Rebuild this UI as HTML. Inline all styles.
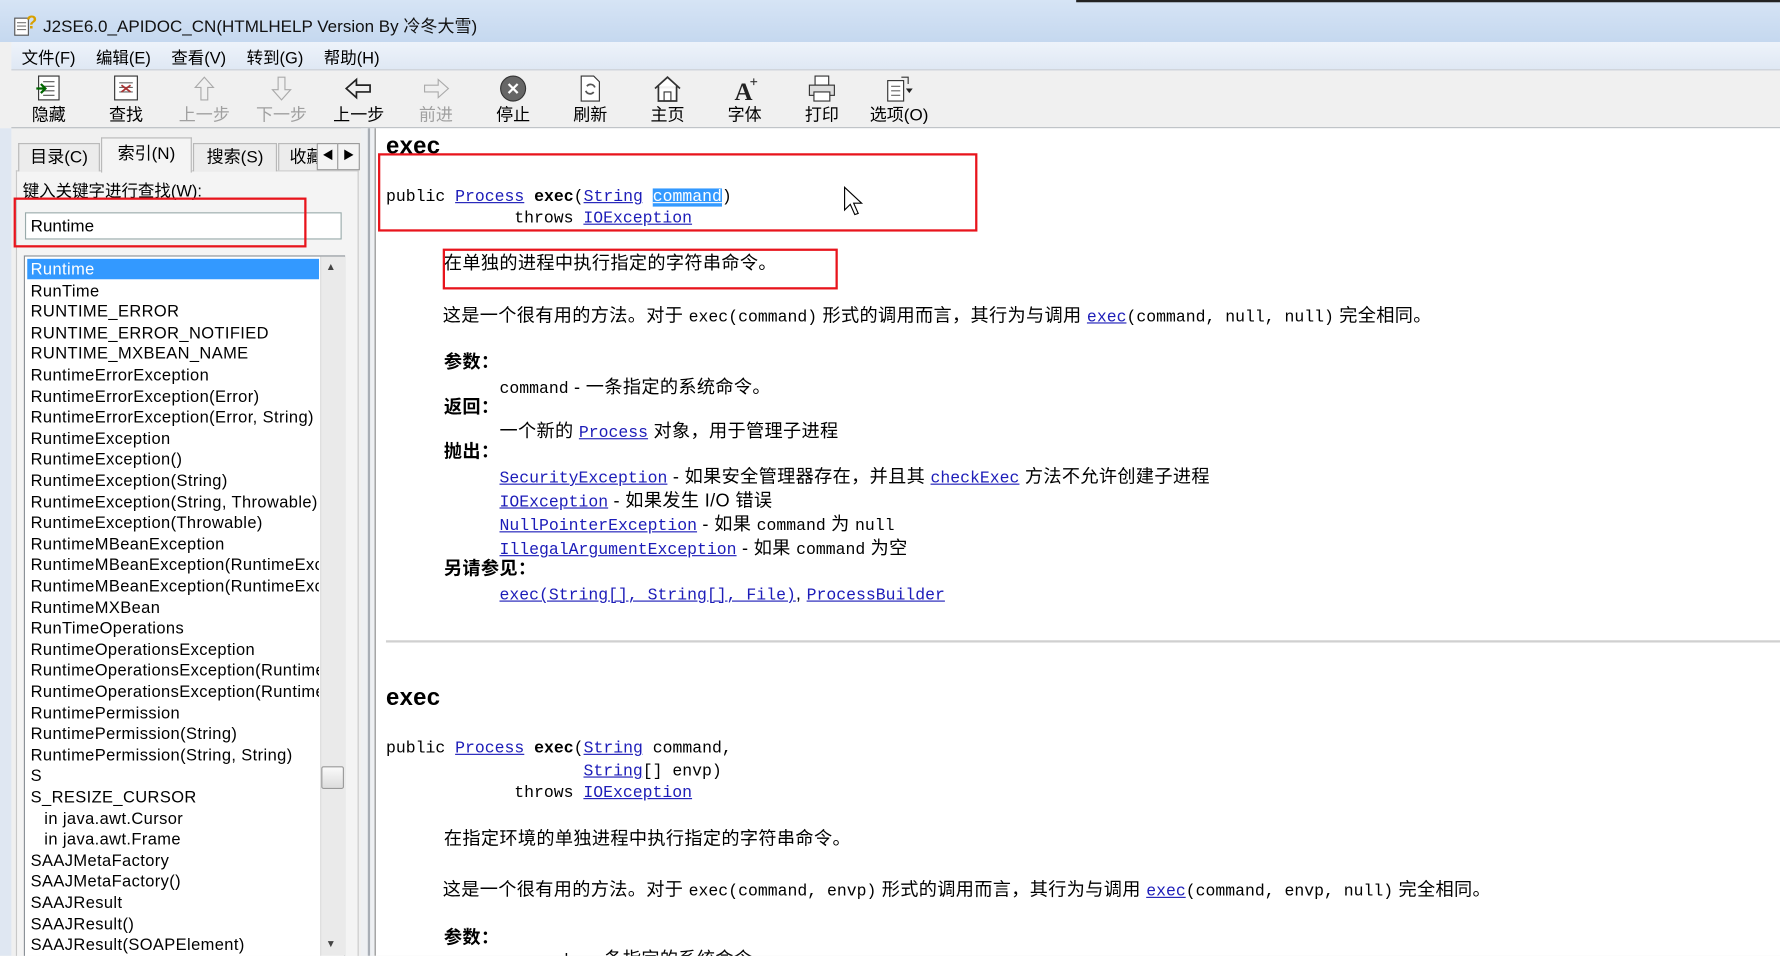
<!DOCTYPE html>
<html><head><meta charset="utf-8"><style>
html,body{margin:0;padding:0;width:1780px;height:956px;overflow:hidden;background:#f0f0f0}
#w{position:absolute;left:0;top:0;width:1568px;height:842px;transform:scale(1.13520);transform-origin:0 0;font-family:"Liberation Sans","Noto Sans CJK SC",sans-serif;color:#000;background:#f0f0f0;overflow:hidden}
.a{position:absolute;white-space:nowrap}
.tb{position:absolute;top:66px;width:60px;text-align:center;font-size:15px}
.tb svg{display:block;margin:0 auto 0}
.g{color:#a0a0a0}
.li{position:absolute;left:27px;font-size:14.5px;line-height:18.6px;white-space:nowrap;letter-spacing:0.35px}
.c{position:absolute;white-space:nowrap;line-height:20px;font-size:16px;margin-top:2px;letter-spacing:0.3px}
.m{font-family:"Liberation Mono","Noto Sans CJK SC",monospace;font-size:14.5px;letter-spacing:0}
a,.l{color:#1c1cb8;text-decoration:underline}
b.h{font-weight:bold}
.rb{position:absolute;border:2px solid #e8141c}
</style></head><body><div id="w">
<!-- title -->
<div class="a" style="left:0;top:0;width:1568px;height:37px;background:linear-gradient(#d6e4f5,#c5d8ef)"></div>
<div class="a" style="left:948px;top:0;width:620px;height:2px;background:#222"></div>
<svg class="a" style="left:12px;top:11px" width="20" height="22"><rect x="1" y="5" width="12" height="15" fill="#fff" stroke="#555"/><path d="M3 9h8M3 12h8M3 15h8" stroke="#777"/><text x="11" y="14" font-size="16" font-weight="bold" fill="#d8a000" font-family="Liberation Sans">?</text></svg>
<div class="a" style="left:38px;top:12px;font-size:15px;color:#111">J2SE6.0_APIDOC_CN(HTMLHELP Version By 冷冬大雪)</div>
<!-- menu -->
<div class="a" style="left:10px;top:37px;width:1558px;height:24px;background:linear-gradient(#eef3fa,#dfe8f4)"></div>
<div class="a" style="left:19px;top:40px;font-size:14.5px;word-spacing:14px">文件(F) 编辑(E) 查看(V) 转到(G) 帮助(H)</div>
<div class="a" style="left:10px;top:61px;width:1558px;height:1px;background:#c8cdd4"></div>
<!-- toolbar -->
<div class="tb" style="left:13px"><svg width="26" height="24"><rect x="4" y="1" width="18" height="21" fill="#fff" stroke="#333"/><path d="M8 6h10M8 10h10M8 14h10M8 18h10" stroke="#555"/><path d="M2 12h8M6 8l4 4-4 4" stroke="#060" stroke-width="2" fill="none"/></svg>隐藏</div>
<div class="tb" style="left:81px"><svg width="26" height="24"><rect x="3" y="1" width="20" height="21" fill="#fff" stroke="#333"/><path d="M7 7h12M7 11h12M7 15h12" stroke="#666"/><path d="M9 9l8 6M17 9l-8 6" stroke="#a33" stroke-width="1.5"/></svg>查找</div>
<div class="tb g" style="left:150px"><svg width="26" height="24"><path d="M13 2l8 9h-5v11h-6V11H5z" fill="none" stroke="#aaa"/></svg>上一步</div>
<div class="tb g" style="left:218px"><svg width="26" height="24"><path d="M13 22l8-9h-5V2h-6v11H5z" fill="none" stroke="#aaa"/></svg>下一步</div>
<div class="tb" style="left:286px"><svg width="26" height="24"><path d="M2 12l9-8v5h12v6H11v5z" fill="none" stroke="#222" stroke-width="1.5"/></svg>上一步</div>
<div class="tb g" style="left:354px"><svg width="26" height="24"><path d="M24 12l-9-8v5H3v6h12v5z" fill="none" stroke="#aaa"/></svg>前进</div>
<div class="tb" style="left:422px"><svg width="26" height="24"><circle cx="13" cy="12" r="11" fill="#666" stroke="#333"/><path d="M9 8l8 8M17 8l-8 8" stroke="#fff" stroke-width="2"/></svg>停止</div>
<div class="tb" style="left:490px"><svg width="26" height="24"><path d="M5 1h11l5 5v17H5z" fill="#fff" stroke="#333"/><path d="M10 10a4 4 0 0 1 7 1M16 15a4 4 0 0 1-7-1" stroke="#555" stroke-width="1.5" fill="none"/></svg>刷新</div>
<div class="tb" style="left:558px"><svg width="26" height="24"><path d="M2 12L13 2l11 10M5 10v13h16V10" fill="#fff" stroke="#333" stroke-width="1.5"/><rect x="10" y="15" width="6" height="8" fill="none" stroke="#333"/></svg>主页</div>
<div class="tb" style="left:626px"><svg width="26" height="24"><text x="4" y="22" font-size="22" font-weight="bold" font-family="Liberation Serif" fill="#222">A</text><path d="M21 3v6M18 6h6" stroke="#333"/></svg>字体</div>
<div class="tb" style="left:694px"><svg width="26" height="24"><rect x="7" y="1" width="12" height="8" fill="#fff" stroke="#333"/><rect x="2" y="9" width="22" height="9" fill="#ddd" stroke="#333"/><rect x="6" y="15" width="14" height="8" fill="#fff" stroke="#333"/></svg>打印</div>
<div class="tb" style="left:762px"><svg width="26" height="24"><rect x="3" y="5" width="14" height="18" fill="#fff" stroke="#333"/><path d="M6 10h8M6 14h8M6 18h8" stroke="#666"/><path d="M15 2h6v6" stroke="#333" fill="none"/><path d="M19 12h6l-3 4z" fill="#222"/></svg>选项(O)</div>
<div class="a" style="left:10px;top:112px;width:1558px;height:1px;background:#b8bcc2"></div>
<!-- left pane -->
<div class="a" style="left:0;top:113px;width:10px;height:729px;background:#dfe7f2"></div>
<div class="a" style="left:14px;top:150px;width:300px;height:692px;border:1px solid #c8c8c8;border-bottom:none;background:#f4f4f4"></div>
<div class="a" style="left:16px;top:126px;width:70px;height:24px;border:1px solid #b8b8b8;border-bottom:none;background:#ececec;font-size:15px;text-align:center;line-height:24px">目录(C)</div>
<div class="a" style="left:89px;top:121px;width:78px;height:30px;border:1px solid #b8b8b8;border-bottom:none;background:#f4f4f4;font-size:15px;text-align:center;line-height:28px">索引(N)</div>
<div class="a" style="left:170px;top:126px;width:72px;height:24px;border:1px solid #b8b8b8;border-bottom:none;background:#ececec;font-size:15px;text-align:center;line-height:24px">搜索(S)</div>
<div class="a" style="left:245px;top:126px;width:36px;height:24px;border:1px solid #b8b8b8;border-bottom:none;background:#ececec;font-size:15px;line-height:24px;padding-left:9px;overflow:hidden;box-sizing:border-box">收藏</div>
<div class="a" style="left:279px;top:126px;width:18px;height:22px;border:1px solid #999;background:#f4f4f4;font-size:10px;text-align:center;line-height:22px">◀</div>
<div class="a" style="left:297px;top:126px;width:18px;height:22px;border:1px solid #999;background:#f4f4f4;font-size:10px;text-align:center;line-height:22px">▶</div>
<div class="a" style="left:20px;top:157px;font-size:14.5px">键入关键字进行查找(W):</div>
<div class="a" style="left:22px;top:187px;width:279px;height:24px;border:1px solid #9aa;background:#fff;box-sizing:border-box;font-size:15px;line-height:24px;padding-left:4px">Runtime</div>
<div class="rb" style="left:12px;top:174px;width:254px;height:40px"></div>
<div class="a" style="left:21px;top:225px;width:283px;height:620px;border:1px solid #8a8f96;background:#fff;box-sizing:border-box"></div>
<div class="a" style="left:282px;top:226px;width:21px;height:616px;background:#eaeaea;border-left:1px solid #ddd"></div>
<div class="a" style="left:287px;top:230px;font-size:9px;color:#444">▲</div>
<div class="a" style="left:287px;top:826px;font-size:9px;color:#444">▼</div>
<div class="a" style="left:283px;top:675px;width:18px;height:18px;background:linear-gradient(#fafafa,#dcdcdc);border:1px solid #999;border-radius:2px"></div>
<div class="a" style="left:24px;top:228px;width:257px;height:18px;background:#3399ff"></div>
<div style="position:absolute;left:0;top:229px">
<div class="li" style="top:0;color:#fff">Runtime</div>
<div class="li" style="top:18.6px">RunTime</div>
<div class="li" style="top:37.2px">RUNTIME_ERROR</div>
<div class="li" style="top:55.8px">RUNTIME_ERROR_NOTIFIED</div>
<div class="li" style="top:74.4px">RUNTIME_MXBEAN_NAME</div>
<div class="li" style="top:93px">RuntimeErrorException</div>
<div class="li" style="top:111.6px">RuntimeErrorException(Error)</div>
<div class="li" style="top:130.2px">RuntimeErrorException(Error, String)</div>
<div class="li" style="top:148.8px">RuntimeException</div>
<div class="li" style="top:167.4px">RuntimeException()</div>
<div class="li" style="top:186px">RuntimeException(String)</div>
<div class="li" style="top:204.6px">RuntimeException(String, Throwable)</div>
<div class="li" style="top:223.2px">RuntimeException(Throwable)</div>
<div class="li" style="top:241.8px">RuntimeMBeanException</div>
<div class="li" style="top:260.4px;width:254px;overflow:hidden">RuntimeMBeanException(RuntimeException)</div>
<div class="li" style="top:279px;width:254px;overflow:hidden">RuntimeMBeanException(RuntimeException, String)</div>
<div class="li" style="top:297.6px">RuntimeMXBean</div>
<div class="li" style="top:316.2px">RunTimeOperations</div>
<div class="li" style="top:334.8px">RuntimeOperationsException</div>
<div class="li" style="top:353.4px;width:254px;overflow:hidden">RuntimeOperationsException(RuntimeException)</div>
<div class="li" style="top:372px;width:254px;overflow:hidden">RuntimeOperationsException(RuntimeException, String)</div>
<div class="li" style="top:390.6px">RuntimePermission</div>
<div class="li" style="top:409.2px">RuntimePermission(String)</div>
<div class="li" style="top:427.8px">RuntimePermission(String, String)</div>
<div class="li" style="top:446.4px">S</div>
<div class="li" style="top:465px">S_RESIZE_CURSOR</div>
<div class="li" style="top:483.6px;left:39px">in java.awt.Cursor</div>
<div class="li" style="top:502.2px;left:39px">in java.awt.Frame</div>
<div class="li" style="top:520.8px">SAAJMetaFactory</div>
<div class="li" style="top:539.4px">SAAJMetaFactory()</div>
<div class="li" style="top:558px">SAAJResult</div>
<div class="li" style="top:576.6px">SAAJResult()</div>
<div class="li" style="top:595.2px">SAAJResult(SOAPElement)</div>
</div>
<!-- splitter -->
<div class="a" style="left:318px;top:113px;width:12px;height:729px;background:#eef0f3"></div>
<div class="a" style="left:324px;top:113px;width:2px;height:729px;background:#a8aeb6"></div>
<!-- content -->
<div class="a" style="left:330px;top:113px;width:1238px;height:729px;background:#fff;border-left:1px solid #888"></div>
<div class="c" style="left:340px;top:114px;font-size:21px;font-weight:bold;line-height:26px">exec</div>
<div class="rb" style="left:333px;top:135px;width:524px;height:65px"></div>
<div class="c m" style="left:340px;top:162px">public <span class="l">Process</span> <b>exec</b>(<span class="l">String</span> <span style="background:#3399ff;color:#fff;text-decoration:underline">command</span>)</div>
<div class="c m" style="left:453px;top:181px">throws <span class="l">IOException</span></div>
<svg class="a" style="left:742px;top:163px" width="20" height="28"><path d="M2 2v20l5-5 4 9 3-1-4-9h7z" fill="#fff" stroke="#000"/></svg>
<div class="rb" style="left:390px;top:219px;width:344px;height:32px"></div>
<div class="c" style="left:391px;top:221px">在单独的进程中执行指定的字符串命令。</div>
<div class="c" style="left:390px;top:267px">这是一个很有用的方法。对于 <span class="m">exec(command)</span> 形式的调用而言，其行为与调用 <span class="m"><span class="l">exec</span>(command, null, null)</span> 完全相同。</div>
<div class="c" style="left:391px;top:308px;font-weight:bold">参数：</div>
<div class="c" style="left:440px;top:330px"><span class="m">command</span> - 一条指定的系统命令。</div>
<div class="c" style="left:391px;top:348px;font-weight:bold">返回：</div>
<div class="c" style="left:440px;top:369px">一个新的 <span class="m l">Process</span> 对象，用于管理子进程</div>
<div class="c" style="left:391px;top:387px;font-weight:bold">抛出：</div>
<div class="c" style="left:440px;top:409px"><span class="m l">SecurityException</span> - 如果安全管理器存在，并且其 <span class="m l">checkExec</span> 方法不允许创建子进程</div>
<div class="c" style="left:440px;top:430px"><span class="m l">IOException</span> - 如果发生 I/O 错误</div>
<div class="c" style="left:440px;top:451px"><span class="m l">NullPointerException</span> - 如果 <span class="m">command</span> 为 <span class="m">null</span></div>
<div class="c" style="left:440px;top:472px"><span class="m l">IllegalArgumentException</span> - 如果 <span class="m">command</span> 为空</div>
<div class="c" style="left:391px;top:490px;font-weight:bold">另请参见：</div>
<div class="c" style="left:440px;top:512px"><span class="m l">exec(String[], String[], File)</span>, <span class="m l">ProcessBuilder</span></div>
<div class="a" style="left:340px;top:564px;width:1228px;height:2px;background:#d0d0d0"></div>
<div class="c" style="left:340px;top:600px;font-size:21px;font-weight:bold;line-height:26px">exec</div>
<div class="c m" style="left:340px;top:648px">public <span class="l">Process</span> <b>exec</b>(<span class="l">String</span> command,</div>
<div class="c m" style="left:514px;top:668px"><span class="l">String</span>[] envp)</div>
<div class="c m" style="left:453px;top:687px">throws <span class="l">IOException</span></div>
<div class="c" style="left:391px;top:728px">在指定环境的单独进程中执行指定的字符串命令。</div>
<div class="c" style="left:390px;top:773px">这是一个很有用的方法。对于 <span class="m">exec(command, envp)</span> 形式的调用而言，其行为与调用 <span class="m"><span class="l">exec</span>(command, envp, null)</span> 完全相同。</div>
<div class="c" style="left:391px;top:815px;font-weight:bold">参数：</div>
<div class="c" style="left:440px;top:834px"><span class="m">command</span> - 一条指定的系统命令。</div>
</div></body></html>
